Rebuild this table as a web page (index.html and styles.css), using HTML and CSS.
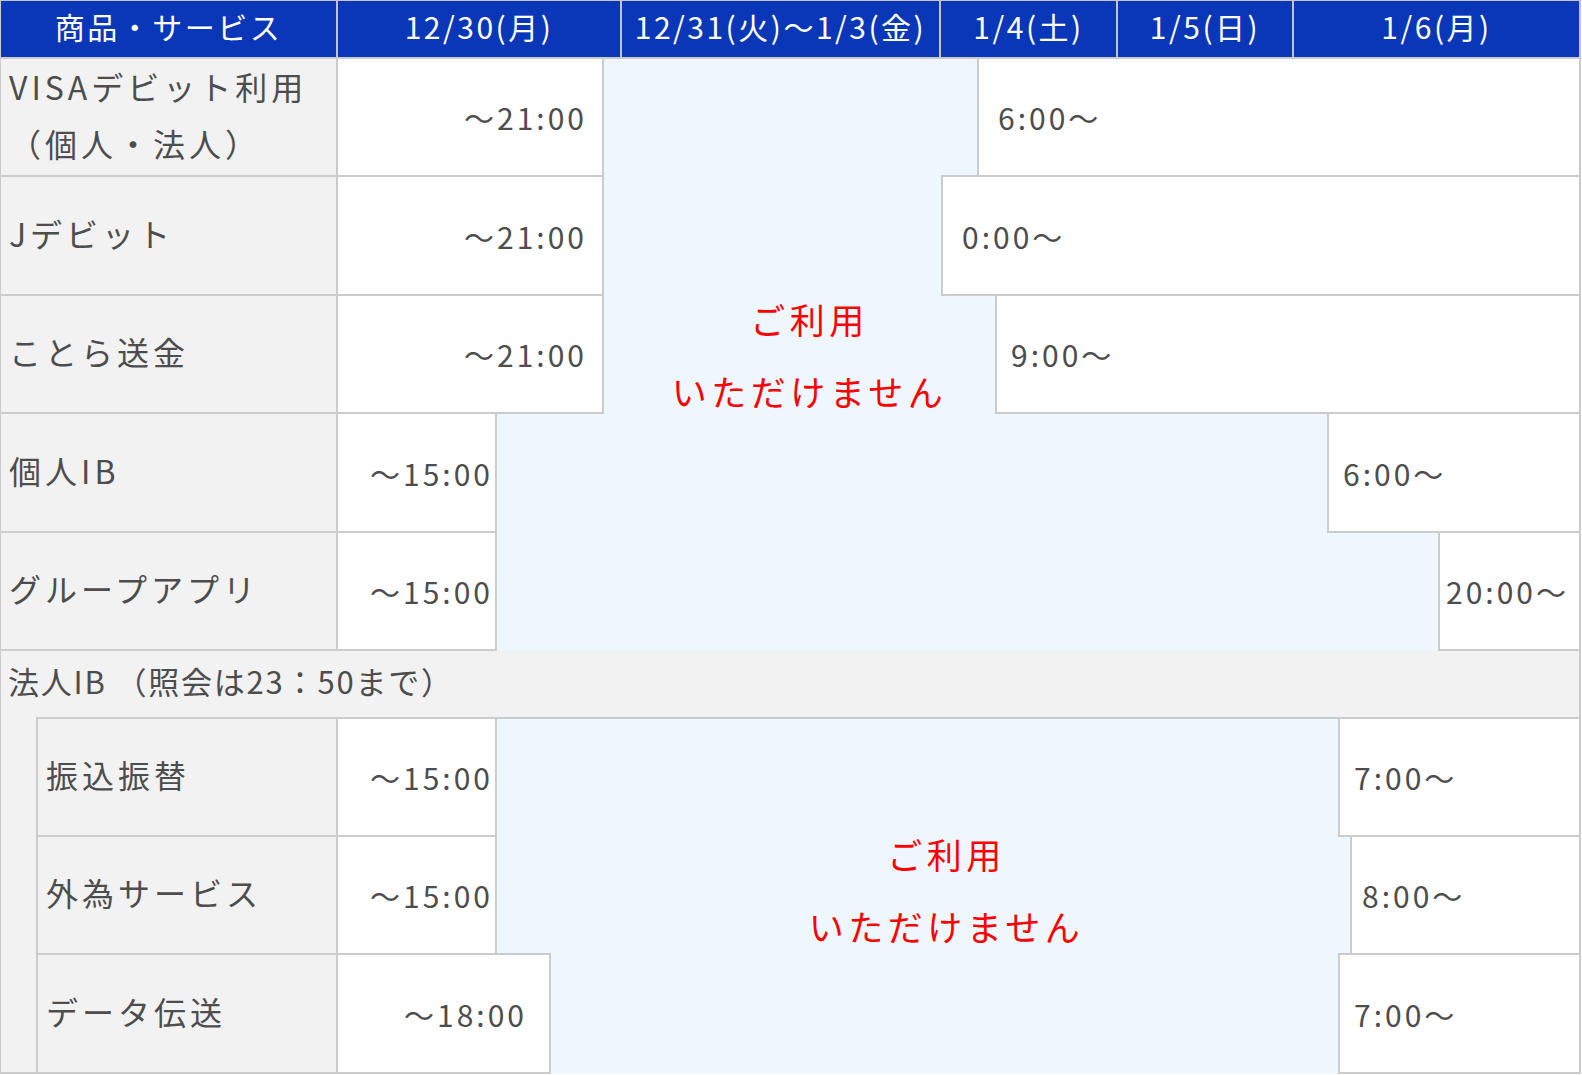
FILE: index.html
```html
<!DOCTYPE html>
<html lang="ja">
<head>
<meta charset="utf-8">
<title>年末年始のサービス休止時間</title>
<link rel="stylesheet" href="styles.css">
</head>
<body>
<div class="schedule">
  <div class="head">
    <div class="hcell h-label">商品・サービス</div>
    <div class="hcell h-d1">12/30(月)</div>
    <div class="hcell h-d2">12/31(火)～1/3(金)</div>
    <div class="hcell h-d3">1/4(土)</div>
    <div class="hcell h-d4">1/5(日)</div>
    <div class="hcell h-d5">1/6(月)</div>
  </div>

  <div class="section">
    <div class="row">
      <div class="label"><span>VISAデビット利用<br>（個人・法人）</span></div>
      <div class="until" style="width:268px">～21:00</div>
      <div class="from pad-l" style="width:604px">6:00～</div>
    </div>
    <div class="row tall">
      <div class="label"><span>Jデビット</span></div>
      <div class="until" style="width:268px">～21:00</div>
      <div class="from pad-l" style="width:640px">0:00～</div>
    </div>
    <div class="row">
      <div class="label"><span>ことら送金</span></div>
      <div class="until" style="width:268px">～21:00</div>
      <div class="from" style="width:586px">9:00～</div>
    </div>
    <div class="row tall">
      <div class="label"><span>個人IB</span></div>
      <div class="until pad-s" style="width:161px">～15:00</div>
      <div class="from" style="width:254px">6:00～</div>
    </div>
    <div class="row">
      <div class="label"><span>グループアプリ</span></div>
      <div class="until pad-s" style="width:161px">～15:00</div>
      <div class="from pad-xs" style="width:143px">20:00～</div>
    </div>
    <div class="closed closed-personal">ご利用<br>いただけません</div>
  </div>

  <div class="group-title">法人IB （照会は23：50まで）</div>

  <div class="corp">
    <div class="indent"></div>
    <div class="corp-body">
      <div class="row">
        <div class="label sub"><span>振込振替</span></div>
        <div class="until pad-s" style="width:161px">～15:00</div>
        <div class="from" style="width:243px">7:00～</div>
      </div>
      <div class="row">
        <div class="label sub"><span>外為サービス</span></div>
        <div class="until pad-s" style="width:161px">～15:00</div>
        <div class="from pad-s" style="width:231px">8:00～</div>
      </div>
      <div class="row tall">
        <div class="label sub"><span>データ伝送</span></div>
        <div class="until pad-m" style="width:215px">～18:00</div>
        <div class="from" style="width:243px">7:00～</div>
      </div>
      <div class="closed closed-corp">ご利用<br>いただけません</div>
    </div>
  </div>
</div>
</body>
</html>
```

FILE: styles.css
```css
* {
  box-sizing: border-box;
  margin: 0;
  padding: 0;
}

body {
  margin: 0;
  background: #ffffff;
  font-family: "Noto Sans CJK JP", "Noto Sans", sans-serif;
  color: #4d4d4d;
}

.schedule {
  width: 1581px;
  border-left: 1px solid #cccccc;
}

/* header */
.head {
  display: flex;
  height: 59px;
  border-top: 1px solid #c4c4c4;
  border-bottom: 2px solid #c9c9c9;
  background: #0a36b8;
}

.hcell {
  display: flex;
  align-items: center;
  justify-content: center;
  padding-bottom: 6px;
  color: #ffffff;
  font-size: 30px;
  letter-spacing: 2.5px;
  border-right: 2px solid #c4c4c4;
  flex: none;
}

.h-label { width: 337px; }
.h-d1 { width: 284px; }
.h-d2 { width: 319px; }
.h-d3 { width: 177px; }
.h-d4 { width: 176px; }
.h-d5 { flex: 1; }

/* body sections */
.section {
  position: relative;
  background: #eef7fe;
}

.row {
  display: flex;
  height: 118px;
}

.row.tall {
  height: 119px;
}

.label {
  flex: none;
  width: 337px;
  margin-top: -2px;
  display: flex;
  align-items: center;
  padding-left: 8px;
  padding-bottom: 5px;
  background: #f2f2f2;
  border-top: 2px solid #cccccc;
  border-bottom: 2px solid #cccccc;
  border-right: 2px solid #cccccc;
  font-size: 32px;
  letter-spacing: 4px;
  line-height: 57px;
}

.label.sub {
  width: 302px;
  border-left: 2px solid #cccccc;
}

.until,
.from {
  flex: none;
  margin-top: -2px;
  display: flex;
  align-items: center;
  background: #ffffff;
  border: 2px solid #cccccc;
  font-size: 30px;
  letter-spacing: 3px;
  white-space: nowrap;
}

.until {
  margin-left: -2px;
  justify-content: flex-end;
  padding-right: 15px;
}

.until.pad-s { padding-right: 2px; }
.until.pad-m { padding-right: 22px; }

.from {
  margin-left: auto;
  padding-left: 14px;
}

.from.pad-l { padding-left: 19px; }
.from.pad-s { padding-left: 10px; }
.from.pad-xs { padding-left: 6px; }

.closed {
  position: absolute;
  top: 0;
  bottom: 0;
  width: 400px;
  display: flex;
  align-items: center;
  justify-content: center;
  text-align: center;
  padding-left: 5px;
  color: #ff0000;
  font-size: 35px;
  letter-spacing: 4.5px;
  line-height: 72px;
}

.closed-personal { left: 606px; }
.closed-corp {
  left: 708px;
  padding-bottom: 14px;
}

/* corporate group */
.group-title {
  height: 68px;
  display: flex;
  align-items: center;
  padding-left: 7px;
  padding-bottom: 9px;
  background: #f2f2f2;
  border-right: 2px solid #cccccc;
  font-size: 31px;
  letter-spacing: 1.8px;
}

.corp {
  display: flex;
}

.indent {
  flex: none;
  width: 35px;
  background: #f2f2f2;
  border-bottom: 2px solid #cccccc;
}

.corp-body {
  flex: 1;
  position: relative;
  margin-top: -2px;
  background: #eef7fe;
  border-top: 2px solid #cccccc;
}
```
